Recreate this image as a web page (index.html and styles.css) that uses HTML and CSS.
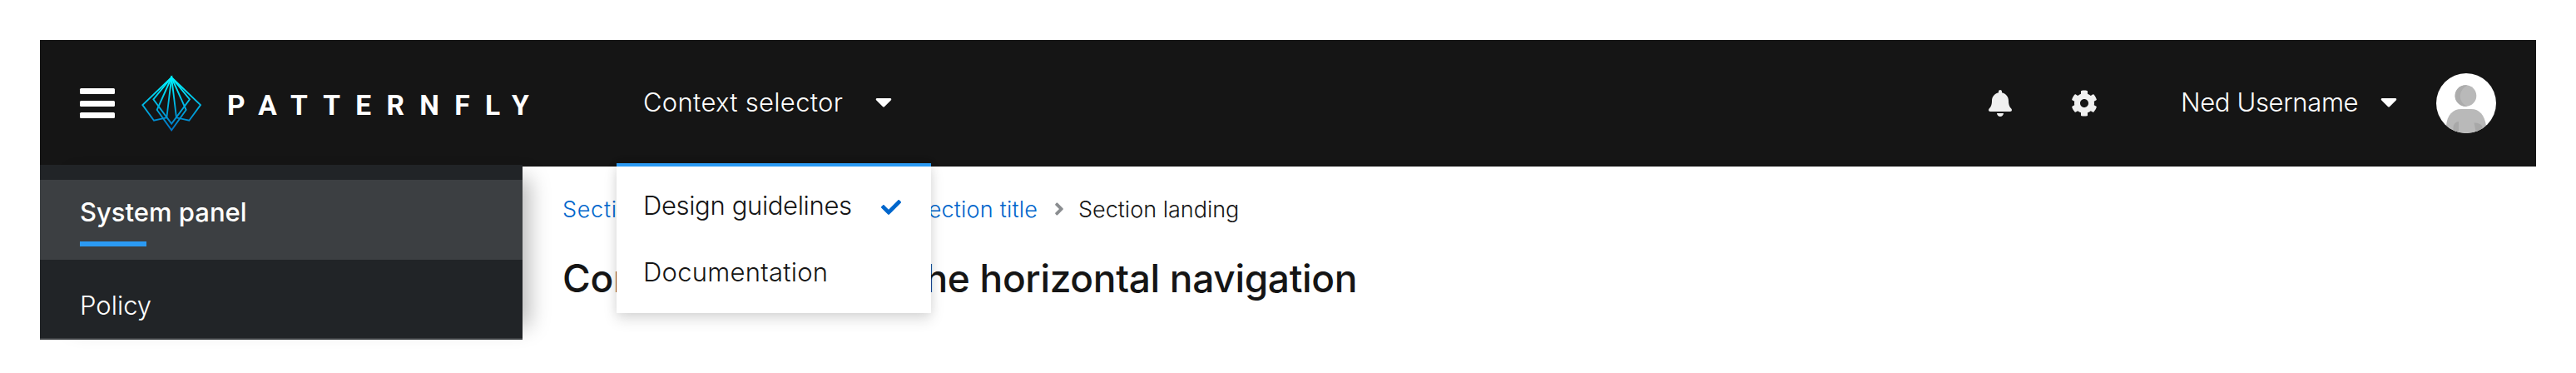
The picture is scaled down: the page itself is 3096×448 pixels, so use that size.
FILE: index.html
```html
<!DOCTYPE html>
<html lang="en">
<head>
<meta charset="utf-8">
<title>PatternFly</title>
<link rel="stylesheet" href="styles.css">
</head>
<body>
<div class="page">
  <header class="masthead">
    <button class="menu-toggle" aria-label="Menu"><span class="bar"></span><span class="bar"></span><span class="bar"></span></button>
    <div class="brand">
      <svg class="brand-mark" viewBox="54 54 228 222">
        <defs>
          <linearGradient id="mark" gradientUnits="userSpaceOnUse" x1="0" y1="66" x2="0" y2="262">
            <stop offset="0" stop-color="#00f0ff"/><stop offset="0.2" stop-color="#00e4f8"/><stop offset="1" stop-color="#0070c4"/>
          </linearGradient>
        </defs>
        <g class="mark-lines" stroke="url(#mark)">
          <path d="M168.500 69L64 168L105 224L151 214Z"/>
          <path d="M168.500 69L273 168L232 224L186 214Z"/>
          <path d="M168.500 69L103 148L168.500 236L234 148Z"/>
          <path d="M168.500 69L116 186L168.500 259L221 186Z"/>
        </g>
      </svg>
      <span class="brand-name">PATTERNFLY</span>
    </div>
    <div class="context">
      <button class="context-toggle">
        <span class="context-label">Context selector</span>
        <svg class="caret" viewBox="0 0 320 512"><path d="M31.3 192h257.3c17.8 0 26.7 21.5 14.1 34.1L174.1 354.7c-7.8 7.8-20.5 7.8-28.3 0L17.2 226.1C4.6 213.5 13.5 192 31.3 192z"/></svg>
      </button>
      <ul class="context-menu">
        <li class="context-item"><span class="item-guidelines">Design guidelines</span>
          <svg class="check" viewBox="0 0 512 512"><path d="M173.898 439.404l-166.4-166.4c-9.997-9.997-9.997-26.206 0-36.204l36.203-36.204c9.997-9.998 26.207-9.998 36.204 0L192 312.69 432.095 72.596c9.997-9.997 26.207-9.997 36.204 0l36.203 36.204c9.997 9.997 9.997 26.206 0 36.204l-294.4 294.401c-9.998 9.997-26.207 9.997-36.204-.001z"/></svg>
        </li>
        <li class="context-item"><span class="item-docs">Documentation</span></li>
      </ul>
    </div>
    <div class="tools">
      <svg class="bell" viewBox="0 0 448 512"><path d="M224 512c35.32 0 63.97-28.65 63.97-64H160.03c0 35.35 28.65 64 63.97 64zm215.39-149.71c-19.32-20.76-55.47-51.99-55.47-154.29 0-77.7-54.48-139.9-127.94-155.16V32c0-17.67-14.32-32-31.98-32s-31.98 14.33-31.98 32v20.84C118.56 68.1 64.08 130.3 64.080 208c0 102.300-36.150 133.530-55.470 154.290-6 6.450-8.660 14.160-8.610 21.710.11 16.400 12.980 32 32.100 32h383.800c19.120 0 32-15.600 32.100-32 .05-7.550-2.610-15.270-8.610-21.710z"/></svg>
      <svg class="cog" viewBox="0 0 512 512"><path d="M487.4 315.7l-42.6-24.6c4.3-23.2 4.3-47 0-70.2l42.6-24.6c4.9-2.8 7.1-8.6 5.5-14-11.1-35.6-30-67.8-54.7-94.6-3.8-4.1-10-5.1-14.8-2.3L380.8 110c-17.9-15.4-38.5-27.3-60.8-35.1V25.800c0-5.600-3.900-10.500-9.400-11.700-36.700-8.200-74.300-7.800-109.200 0-5.500 1.200-9.400 6.100-9.400 11.700V75c-22.200 7.900-42.800 19.800-60.800 35.100L88.700 85.500c-4.900-2.800-11-1.900-14.800 2.300-24.700 26.700-43.600 58.900-54.700 94.600-1.700 5.400.6 11.200 5.500 14L67.300 221c-4.300 23.200-4.300 47 0 70.200l-42.600 24.600c-4.900 2.800-7.100 8.600-5.500 14 11.100 35.600 30 67.800 54.700 94.600 3.800 4.100 10 5.100 14.800 2.300l42.600-24.600c17.900 15.400 38.500 27.300 60.800 35.100v49.200c0 5.600 3.900 10.500 9.400 11.700 36.700 8.200 74.300 7.800 109.200 0 5.500-1.200 9.400-6.100 9.400-11.700v-49.200c22.200-7.900 42.800-19.800 60.800-35.100l42.600 24.600c4.900 2.800 11 1.900 14.800-2.300 24.700-26.700 43.600-58.900 54.700-94.600 1.500-5.500-.7-11.300-5.600-14.100zM256 336c-44.100 0-80-35.900-80-80s35.900-80 80-80 80 35.900 80 80-35.900 80-80 80z"/></svg>
      <button class="user">
        <span class="user-name">Ned Username</span>
        <svg class="caret" viewBox="0 0 320 512"><path d="M31.3 192h257.3c17.8 0 26.7 21.5 14.1 34.1L174.1 354.7c-7.8 7.8-20.5 7.8-28.3 0L17.2 226.1C4.6 213.5 13.5 192 31.3 192z"/></svg>
      </button>
      <svg class="avatar" viewBox="0 0 72 72">
        <clipPath id="disc"><circle cx="36" cy="36" r="36"/></clipPath>
        <g clip-path="url(#disc)">
          <rect width="72" height="72" fill="#fff"/>
          <circle cx="35.500" cy="27" r="12.800" fill="#b9b9b9"/>
          <path d="M35.500 14.200a12.800 12.800 0 1 0 2 25.400C26 35 26 20 37.500 14.400z" fill="#acacac"/>
          <path d="M12 72V63C13 50 20 43 30 43H42C52 43 58 50 60 63V72Z" fill="#b9b9b9"/>
          <path d="M20.500 72V66C20.500 61 23 58.500 27 58V72ZM45.500 59.500C51 59.500 54 61 55.500 64L54 72H48Z" fill="#a8a8a8"/>
        </g>
      </svg>
    </div>
  </header>
  <div class="body">
    <nav class="sidebar">
      <a class="nav-link current"><span class="nav-system">System panel</span></a>
      <a class="nav-link"><span class="nav-policy">Policy</span></a>
    </nav>
    <main class="content">
      <div class="crumbs">
        <span class="crumb first">Section home</span>
        <svg class="angle" viewBox="0 0 256 512"><path d="M224.3 273l-136 136c-9.4 9.4-24.6 9.4-33.9 0l-22.600-22.600c-9.400-9.400-9.400-24.600 0-33.900l96.400-96.400-96.400-96.400c-9.400-9.400-9.400-24.600 0-33.900L54.300 103c9.400-9.400 24.600-9.400 33.900 0l136 136c9.500 9.400 9.500 24.600.1 34z"/></svg>
        <span class="crumb second">Section title</span>
        <svg class="angle" viewBox="0 0 256 512"><path d="M224.3 273l-136 136c-9.4 9.4-24.6 9.4-33.9 0l-22.600-22.600c-9.400-9.400-9.400-24.600 0-33.900l96.400-96.400-96.400-96.400c-9.400-9.400-9.400-24.600 0-33.900L54.300 103c9.400-9.400 24.600-9.400 33.900 0l136 136c9.500 9.400 9.500 24.600.1 34z"/></svg>
        <span class="crumb here">Section landing</span>
      </div>
      <h1 class="title">Context selector in the horizontal navigation</h1>
    </main>
  </div>
</div>
</body>
</html>
```
FILE: styles.css
```css
* { box-sizing: border-box; }
body { margin: 0; background: #fff; color: #151515; font-family: Inter, "Liberation Sans", sans-serif; font-weight: 300; font-size: 31px; }
button { background: none; border: 0; padding: 0; font: inherit; color: inherit; }
svg { display: block; flex: none; fill: currentColor; }
span { white-space: nowrap; }
.page { width: 3096px; height: 448px; padding: 48px; overflow: hidden; }

.masthead { height: 152px; background: #151515; color: #fff; display: flex; padding: 0 48px; align-items: center; }
.menu-toggle { width: 42px; height: 36px; display: flex; flex-direction: column; justify-content: space-between; }
.bar { height: 7px; border-radius: 1.500px; background: #fff; }
.brand { display: flex; align-items: center; margin-left: 30px; width: 573px; }
.brand-mark { width: 76px; height: 74px; margin-top: 2px; }
.mark-lines { fill: none; stroke-width: 5.500; }
.brand-name { font-family: Roboto, sans-serif; font-weight: 700; font-size: 33.500px; letter-spacing: 18.300px; line-height: 40px; margin: 5px 0 0 29px; }
.context { position: relative; height: 152px; width: 378px; }
.context-toggle { display: flex; align-items: center; height: 148px; padding-left: 32px; }
.context-label { width: 279px; text-align: left; letter-spacing: 0.300px; }
.caret { width: 20px; height: 32px; }
.context-menu { position: absolute; top: 148px; left: 0; width: 378px; height: 180px; margin: 0; padding: 9px 32px 0; list-style: none; background: #fff; color: #151515; border-top: 4px solid #2b9af3; box-shadow: 0 8px 16px rgba(3,3,3,.12), 0 0 12px rgba(3,3,3,.08); z-index: 3; }
.context-item { display: flex; align-items: center; height: 80px; }
.item-guidelines { width: 286px; letter-spacing: -0.350px; padding-bottom: 5px; }
.item-docs { letter-spacing: 0.250px; padding-bottom: 5px; }
.check { width: 24px; height: 24px; color: #06c; }
.tools { display: flex; align-items: center; margin-left: auto; }
.bell { width: 28px; height: 32px; color: #f0f0f0; }
.cog { width: 32px; height: 32px; margin-left: 71px; color: #f0f0f0; }
.user { display: flex; align-items: center; margin-left: 100px; padding-bottom: 4px; }
.user-name { width: 240px; text-align: left; letter-spacing: -0.350px; }
.avatar { width: 72px; height: 72px; margin-left: 47px; }

.body { display: flex; height: 208px; }
.sidebar { position: relative; z-index: 1; width: 580px; height: 210px; margin-top: -2px; padding-top: 18px; background: #212427; color: #fff; border-bottom: 2px solid #3c3f42; box-shadow: 24px 0 24px -16px rgba(3,3,3,.28); }
.nav-link { display: flex; flex-direction: column; height: 96px; padding: 17px 48px 0; line-height: 44px; }
.nav-link.current { background: #3c3f42; font-weight: 500; }
.nav-link.current::after { content: ""; width: 80px; height: 6px; margin-top: 13px; background: #2b9af3; }
.nav-link:last-child { padding-top: 33px; }
.content { padding: 33px 0 0 48px; }
.crumbs { display: flex; align-items: center; height: 36px; font-size: 27px; color: #06c; }
.first { width: 380px; letter-spacing: 0.700px; }
.second { width: 151px; margin-left: 28px; text-align: right; letter-spacing: 0.200px; }
.here { color: #151515; margin-left: 17px; }
.angle { width: 12px; height: 24px; margin-left: 20px; color: #8a8d90; }
.title { margin: 34px 0 0; font-size: 46px; line-height: 62px; font-weight: 500; white-space: nowrap; letter-spacing: -0.310px; }
.first + .angle { margin-left: 0; }
```
